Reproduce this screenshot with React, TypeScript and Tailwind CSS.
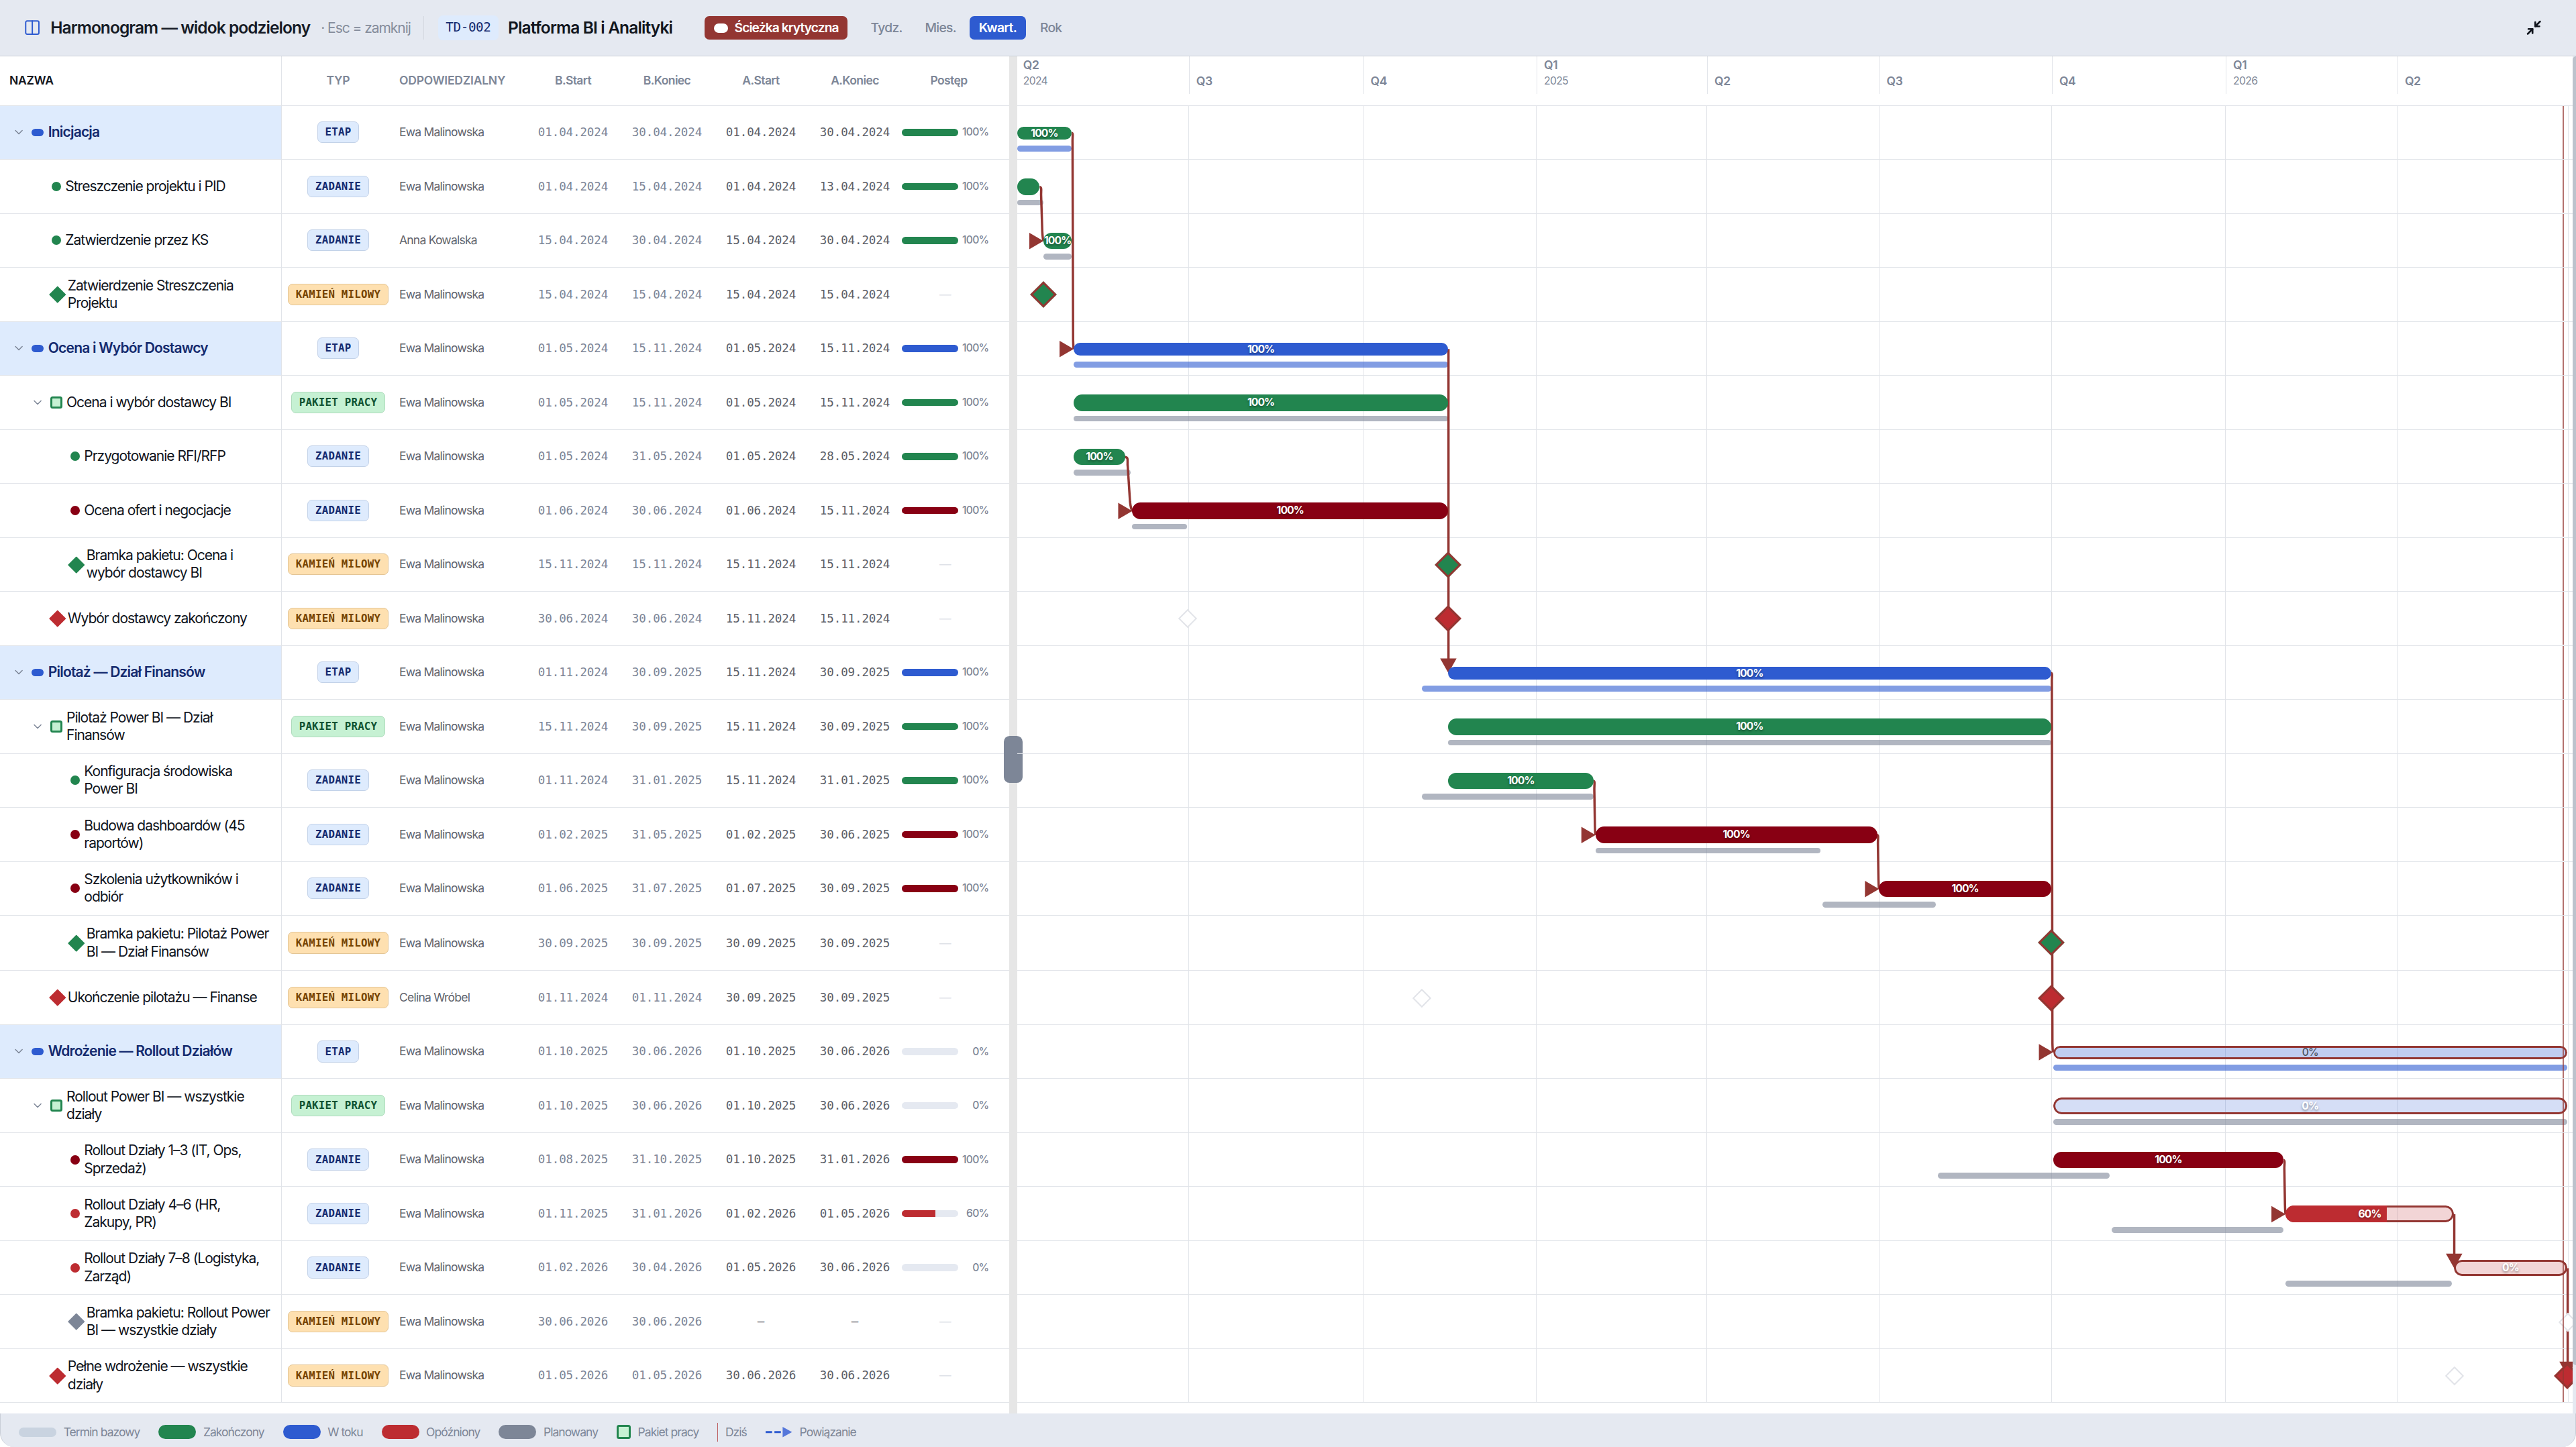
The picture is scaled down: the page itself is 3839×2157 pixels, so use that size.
import { ChevronDown, Columns2, Minimize2 } from 'lucide-react';

type Kind = 'stage' | 'package' | 'task' | 'milestone';
type Tone = 'green' | 'blue' | 'dark' | 'red' | 'gray';

interface Item {
  kind: Kind;
  level: 0 | 1 | 2;
  name: string;
  tone: Tone;
  owner?: string;
  dates: [string, string, string, string];
  progress?: number;
  barTone?: Tone;
  critical?: boolean;
  hideLabel?: boolean;
  tall?: boolean;
}

const ITEMS: Item[] = [
  { kind: 'stage', level: 0, name: 'Inicjacja', tone: 'green', dates: ['01.04.2024', '30.04.2024', '01.04.2024', '30.04.2024'], progress: 100 },
  { kind: 'task', level: 1, name: 'Streszczenie projektu i PID', tone: 'green', dates: ['01.04.2024', '15.04.2024', '01.04.2024', '13.04.2024'], progress: 100, hideLabel: true },
  { kind: 'task', level: 1, name: 'Zatwierdzenie przez KS', tone: 'green', owner: 'Anna Kowalska', dates: ['15.04.2024', '30.04.2024', '15.04.2024', '30.04.2024'], progress: 100 },
  { kind: 'milestone', level: 1, name: 'Zatwierdzenie Streszczenia\nProjektu', tone: 'green', dates: ['15.04.2024', '15.04.2024', '15.04.2024', '15.04.2024'] },
  { kind: 'stage', level: 0, name: 'Ocena i Wybór Dostawcy', tone: 'blue', dates: ['01.05.2024', '15.11.2024', '01.05.2024', '15.11.2024'], progress: 100 },
  { kind: 'package', level: 1, name: 'Ocena i wybór dostawcy BI', tone: 'green', dates: ['01.05.2024', '15.11.2024', '01.05.2024', '15.11.2024'], progress: 100 },
  { kind: 'task', level: 2, name: 'Przygotowanie RFI/RFP', tone: 'green', dates: ['01.05.2024', '31.05.2024', '01.05.2024', '28.05.2024'], progress: 100 },
  { kind: 'task', level: 2, name: 'Ocena ofert i negocjacje', tone: 'dark', dates: ['01.06.2024', '30.06.2024', '01.06.2024', '15.11.2024'], progress: 100 },
  { kind: 'milestone', level: 2, name: 'Bramka pakietu: Ocena i\nwybór dostawcy BI', tone: 'green', dates: ['15.11.2024', '15.11.2024', '15.11.2024', '15.11.2024'] },
  { kind: 'milestone', level: 1, name: 'Wybór dostawcy zakończony', tone: 'red', dates: ['30.06.2024', '30.06.2024', '15.11.2024', '15.11.2024'] },
  { kind: 'stage', level: 0, name: 'Pilotaż — Dział Finansów', tone: 'blue', dates: ['01.11.2024', '30.09.2025', '15.11.2024', '30.09.2025'], progress: 100 },
  { kind: 'package', level: 1, name: 'Pilotaż Power BI — Dział\nFinansów', tone: 'green', dates: ['15.11.2024', '30.09.2025', '15.11.2024', '30.09.2025'], progress: 100 },
  { kind: 'task', level: 2, name: 'Konfiguracja środowiska\nPower BI', tone: 'green', dates: ['01.11.2024', '31.01.2025', '15.11.2024', '31.01.2025'], progress: 100 },
  { kind: 'task', level: 2, name: 'Budowa dashboardów (45\nraportów)', tone: 'dark', dates: ['01.02.2025', '31.05.2025', '01.02.2025', '30.06.2025'], progress: 100 },
  { kind: 'task', level: 2, name: 'Szkolenia użytkowników i\nodbiór', tone: 'dark', dates: ['01.06.2025', '31.07.2025', '01.07.2025', '30.09.2025'], progress: 100 },
  { kind: 'milestone', level: 2, name: 'Bramka pakietu: Pilotaż Power\nBI — Dział Finansów', tone: 'green', dates: ['30.09.2025', '30.09.2025', '30.09.2025', '30.09.2025'], tall: true },
  { kind: 'milestone', level: 1, name: 'Ukończenie pilotażu — Finanse', tone: 'red', owner: 'Celina Wróbel', dates: ['01.11.2024', '01.11.2024', '30.09.2025', '30.09.2025'] },
  { kind: 'stage', level: 0, name: 'Wdrożenie — Rollout Działów', tone: 'blue', dates: ['01.10.2025', '30.06.2026', '01.10.2025', '30.06.2026'], progress: 0, critical: true },
  { kind: 'package', level: 1, name: 'Rollout Power BI — wszystkie\ndziały', tone: 'green', barTone: 'blue', dates: ['01.10.2025', '30.06.2026', '01.10.2025', '30.06.2026'], progress: 0, critical: true },
  { kind: 'task', level: 2, name: 'Rollout Działy 1–3 (IT, Ops,\nSprzedaż)', tone: 'dark', dates: ['01.08.2025', '31.10.2025', '01.10.2025', '31.01.2026'], progress: 100 },
  { kind: 'task', level: 2, name: 'Rollout Działy 4–6 (HR,\nZakupy, PR)', tone: 'red', dates: ['01.11.2025', '31.01.2026', '01.02.2026', '01.05.2026'], progress: 60, critical: true },
  { kind: 'task', level: 2, name: 'Rollout Działy 7–8 (Logistyka,\nZarząd)', tone: 'red', dates: ['01.02.2026', '30.04.2026', '01.05.2026', '30.06.2026'], progress: 0, critical: true },
  { kind: 'milestone', level: 2, name: 'Bramka pakietu: Rollout Power\nBI — wszystkie działy', tone: 'gray', dates: ['30.06.2026', '30.06.2026', '—', '—'] },
  { kind: 'milestone', level: 1, name: 'Pełne wdrożenie — wszystkie\ndziały', tone: 'red', dates: ['01.05.2026', '01.05.2026', '30.06.2026', '30.06.2026'] },
];

const BG: Record<Tone, string> = {
  green: 'bg-[#22854f]',
  blue: 'bg-[#2e5bd0]',
  dark: 'bg-[#880013]',
  red: 'bg-[#bd2c31]',
  gray: 'bg-[#7d8697]',
};

const TINT: Record<Tone, string> = {
  green: 'bg-[#22854f]/20',
  blue: 'bg-[#2e5bd0]/20',
  dark: 'bg-[#880013]/20',
  red: 'bg-[#bd2c31]/20',
  gray: 'bg-[#7d8697]/20',
};

const BADGE: Record<Kind, [string, string]> = {
  stage: ['ETAP', 'bg-[#deebfd] border-[#c3d2e8] text-[#142a6e]'],
  task: ['ZADANIE', 'bg-[#deebfd] border-[#c3d2e8] text-[#142a6e]'],
  package: ['PAKIET PRACY', 'bg-[#c6f1d3] border-[#addabb] text-[#0f5230]'],
  milestone: ['KAMIEŃ MILOWY', 'bg-[#fee0b0] border-[#e3c596] text-[#754300]'],
};

const DAY_WIDTH = 1.61;
const ORIGIN = Date.UTC(2024, 3, 1);

function toX(date: string) {
  const [d, m, y] = date.split('.').map(Number);
  return ((Date.UTC(y, m - 1, d) - ORIGIN) / 86400000) * DAY_WIDTH - 0.25;
}

const rowHeight = (item: Item) => (item.tall ? 47 : 46);
const rowHeightClass = (item: Item) => (item.tall ? 'h-[47px]' : 'h-[46px]');
const rowCenter = (index: number) => ITEMS.slice(0, index).reduce((sum, i) => sum + rowHeight(i), 0) + 23;

const QUARTERS = [
  { x: 0, label: 'Q2', year: '2024' },
  { x: 145.8, label: 'Q3' },
  { x: 294.2, label: 'Q4' },
  { x: 441.9, label: 'Q1', year: '2025' },
  { x: 587.1, label: 'Q2' },
  { x: 733.6, label: 'Q3' },
  { x: 880.7, label: 'Q4' },
  { x: 1028.8, label: 'Q1', year: '2026' },
  { x: 1175, label: 'Q2' },
  { x: 1320.8, label: '' },
];

const LINKS: [number, number][] = [
  [0, 4],
  [1, 2],
  [6, 7],
  [4, 10],
  [12, 13],
  [13, 14],
  [10, 17],
  [19, 20],
  [20, 21],
  [21, 23],
];

function Marker({ item }: { item: Item }) {
  if (item.kind === 'stage') return <span className="h-1.5 w-2.5 shrink-0 rounded-full bg-[#2e5bd0]" />;
  if (item.kind === 'package')
    return <span className="size-2.5 shrink-0 rounded-[2px] border-[1.8px] border-[#22854f] bg-[#c6f1d3]" />;
  if (item.kind === 'task') return <span className={`size-2 shrink-0 rounded-full ${BG[item.tone]}`} />;
  return <span className={`size-2.5 shrink-0 rotate-45 rounded-[0.5px] ${BG[item.tone]}`} />;
}

const INDENT = ['pl-2', 'pl-6', 'pl-10'];

function NameCell({ item }: { item: Item }) {
  const foldable = item.kind === 'stage' || item.kind === 'package';
  return (
    <div
      className={`flex w-60 shrink-0 items-center border-r border-[#e1e4e9] ${INDENT[item.level]} ${
        item.kind === 'stage' ? 'bg-[#deebfd]' : ''
      }`}
    >
      {foldable ? (
        <span className="mr-[3px] flex w-4 shrink-0 justify-center">
          <ChevronDown className="size-[11.5px] text-[#7d8697]" strokeWidth={1.8} />
        </span>
      ) : (
        <span className="w-5 shrink-0" />
      )}
      <Marker item={item} />
      <span
        className={`whitespace-pre text-xs leading-[15px] ${
          item.kind === 'stage'
            ? 'ml-1 font-semibold tracking-[-0.038em] text-[#142a6e]'
            : 'ml-[3.6px] tracking-[-0.048em] text-[#11151d]'
        }`}
      >
        {item.name}
      </span>
    </div>
  );
}

function TableRow({ item }: { item: Item }) {
  const [label, tone] = BADGE[item.kind];
  return (
    <div className={`flex border-b border-[#e1e4e9] ${rowHeightClass(item)}`}>
      <NameCell item={item} />
      <div className="flex w-24 shrink-0 items-center justify-center">
        <span
          className={`flex h-[18.5px] items-center whitespace-pre rounded border px-1.5 font-['DejaVu_Sans_Mono',monospace] text-[9px] font-bold tracking-[0.015em] ${tone}`}
        >
          {label}
        </span>
      </div>
      <div className="flex w-28 shrink-0 items-center pl-1 text-[10px] tracking-[-0.044em] text-[#5f646d]">
        {item.owner ?? 'Ewa Malinowska'}
      </div>
      {item.dates.map((date, i) => (
        <div
          key={i}
          className={`flex w-20 shrink-0 items-center justify-center font-['DejaVu_Sans_Mono',monospace] text-[10px] tracking-[-0.006em] ${
            i < 2 ? 'text-[#7d8697]' : 'text-[#5c6068]'
          }`}
        >
          {date}
        </div>
      ))}
      <div className="flex grow items-center">
        {item.progress === undefined ? (
          <span className="w-[74px] text-center text-[10px] text-[#dfe2e8]">—</span>
        ) : (
          <>
            <span className="h-1.5 w-12 overflow-hidden rounded-full bg-[#e5e9f1]">
              <span className={`block h-full ${BG[item.tone]}`} style={{ width: `${item.progress}%` }} />
            </span>
            <span className="w-[26px] text-right text-[9px] font-medium tracking-[-0.048em] text-[#7d8697]">
              {item.progress}%
            </span>
          </>
        )}
      </div>
    </div>
  );
}

function Baseline({ item }: { item: Item }) {
  if (item.kind === 'milestone') return null;
  const x = toX(item.dates[0]);
  return (
    <div
      className={`absolute top-[34px] h-[5px] rounded-full opacity-60 ${item.kind === 'stage' ? 'bg-[#2e5bd0]' : 'bg-[#7d8697]'}`}
      style={{ left: x, width: toX(item.dates[1]) - x }}
    />
  );
}

function Bar({ item }: { item: Item }) {
  if (item.kind === 'milestone') {
    const planned = item.dates[2] === '—';
    const moved = item.dates[0] !== item.dates[2];
    return (
      <>
        {moved && (
          <div
            className="absolute top-[17.3px] -ml-[5.7px] size-[11.4px] rotate-45 border-[1.5px] border-[#e2e4e9] bg-white"
            style={{ left: toX(item.dates[0]) + 0.5 }}
          />
        )}
        {!planned && (
          <div
            className={`absolute top-[15px] -ml-2 size-4 rotate-45 border-2 border-[#933632] ${BG[item.tone]}`}
            style={{ left: toX(item.dates[2]) + 0.2 }}
          />
        )}
      </>
    );
  }
  const x = toX(item.dates[2]);
  const stage = item.kind === 'stage';
  const tone = item.barTone ?? item.tone;
  const progress = item.progress ?? 0;
  const label =
    stage && progress === 0
      ? 'font-medium text-[#4a5160]'
      : 'font-bold text-white [text-shadow:0_1px_2px_rgba(0,0,0,0.4)]';
  return (
    <div
      className={`absolute overflow-hidden rounded-full ${stage ? 'top-[18px] h-[11px]' : 'top-4 h-3.5'}`}
      style={{ left: x, width: toX(item.dates[3]) - x + (item.dates[3] === '28.05.2024' ? 0.4 : 0) }}
    >
      {item.critical && (
        <div
          className={`absolute inset-0 rounded-full border-2 border-[#933632] ${stage ? 'bg-[#2e5bd0]/30' : TINT[tone]}`}
        />
      )}
      <div className={`absolute inset-y-0 left-0 ${BG[tone]}`} style={{ width: `${progress}%` }} />
      {!item.hideLabel && (
        <div
          className={`absolute inset-x-0 inset-y-0 flex items-center justify-center text-[9px] leading-none tracking-[-0.06em] ${label}`}
        >
          {progress}%
        </div>
      )}
    </div>
  );
}

function Links() {
  return (
    <svg className="absolute left-0 top-0 h-[1105px] w-[1325px] overflow-visible" fill="none">
      {LINKS.map(([from, to]) => {
        const x1 = toX(ITEMS[from].dates[3]);
        const x2 = toX(ITEMS[to].dates[2]);
        const y1 = rowCenter(from);
        const y2 = rowCenter(to);
        const down = x1 === x2;
        const c = Math.max((x2 - x1) / 2, 0);
        return (
          <g key={`${from}-${to}`}>
            <path
              d={
                down
                  ? `M${x1 + 0.4} ${y1}V${y2 - 10}`
                  : `M${x1} ${y1}C${x1 + c + 0.6} ${y1} ${x1 + c * 0.6} ${y1 + 4} ${x1 + c * 0.8} ${y1 + 8}L${x2 - c * 0.6} ${y2 - 8}Q${x2 - c * 0.4} ${y2 - 2} ${x2} ${y2}`
              }
              stroke="#933632"
              strokeWidth={2}
            />
            <path
              d={down ? `M${x2 + 0.3} ${y2}l-7 -12.5h14z` : `M${x2} ${y2}l-12 -7v14z`}
              fill="#933632"
            />
          </g>
        );
      })}
    </svg>
  );
}

function Chart() {
  return (
    <div className="relative min-w-0 flex-1 overflow-hidden">
      <div className="relative h-[42px] border-b border-[#e1e4e9]">
        {QUARTERS.slice(0, 9).map((q) => (
          <div
            key={q.x}
            className={`absolute top-0 h-8 text-[10px] leading-[14px] text-[#7d8697] ${
              q.x > 0 ? 'ml-[0.6px] border-l border-[#e1e4e9] pl-[5.5px]' : 'pl-[5px]'
            } ${q.year ? 'pt-[0.5px]' : 'pt-[14px]'}`}
            style={{ left: q.x }}
          >
            <div className="font-semibold tracking-[-0.02em]">{q.label}</div>
            {q.year && <div className="text-[9px] tracking-[-0.044em]">{q.year}</div>}
          </div>
        ))}
      </div>
      <div className="relative">
        {QUARTERS.slice(1).map((q) => (
          <div key={q.x} className="absolute inset-y-0 border-l border-[#e1e4e9]" style={{ left: q.x }} />
        ))}
        {ITEMS.map((item) => (
          <div key={item.name} className={`relative border-b border-[#e1e4e9] ${rowHeightClass(item)}`}>
            <Baseline item={item} />
          </div>
        ))}
        <Links />
        <div className="absolute inset-0">
          {ITEMS.map((item) => (
            <div key={item.name} className={`relative ${rowHeightClass(item)}`}>
              <Bar item={item} />
              <div className="absolute bottom-[0.6px] left-[1316px] top-0 w-[1.2px] bg-[#933632]/70" />
            </div>
          ))}
        </div>
      </div>
    </div>
  );
}

function Header() {
  return (
    <header className="flex h-12 shrink-0 items-center border-b border-[#c9ced7] bg-[#e5e9f1] pl-5">
      <Columns2 className="size-[15px] shrink-0 text-[#2e5bd0]" strokeWidth={1.8} />
      <h1 className="ml-2 w-[230.3px] shrink-0 whitespace-nowrap text-sm font-semibold tracking-[-0.038em] text-[#161b26]">
        Harmonogram — widok podzielony
      </h1>
      <span className="w-[87.2px] shrink-0 whitespace-nowrap text-xs tracking-[-0.05em] text-[#858d9c]">· Esc = zamknij</span>
      <span className="h-5 border-l border-[#d3d8e0]" />
      <span className="ml-3 flex h-[21px] w-[51.5px] shrink-0 items-center justify-center rounded bg-[#deebfd] font-['DejaVu_Sans_Mono',monospace] text-[11px] tracking-[-0.02em] text-[#142a6e]">
        TD-002
      </span>
      <h2 className="ml-2 w-[167.4px] shrink-0 whitespace-nowrap text-sm font-semibold tracking-[-0.035em] text-[#11151d]">
        Platforma BI i Analityki
      </h2>
      <button className="flex h-[20.5px] w-[122px] shrink-0 items-center rounded bg-[#933632] pl-2 text-[11px] font-semibold tracking-[-0.048em] text-white">
        <span className="mr-[5.5px] h-2 w-3 rounded-full bg-white" />
        Ścieżka krytyczna
      </button>
      <div className="ml-3 flex gap-1 text-[11px] font-medium tracking-[-0.035em] text-[#7d8697]">
        <button className="h-[20.5px] w-[42px] text-center">Tydz.</button>
        <button className="h-[20.5px] w-[42px] text-center">Mies.</button>
        <button className="h-[20.5px] w-[47.5px] rounded bg-[#2e5bd0] text-center font-semibold text-white">Kwart.</button>
        <button className="h-[20.5px] w-[35px] text-center">Rok</button>
      </div>
      <Minimize2 className="ml-auto mr-[29px] size-3.5 text-[#11151d]" strokeWidth={2.6} />
    </header>
  );
}

function Table() {
  return (
    <div className="w-[859.4px] shrink-0 overflow-hidden">
      <div className="flex h-[42px] items-stretch border-b border-[#e1e4e9] text-[10px] font-semibold text-[#7d8697]">
        <div className="flex w-60 shrink-0 items-center border-r border-[#e1e4e9] pl-2 tracking-[-0.012em] text-[#11151d]">
          NAZWA
        </div>
        <div className="flex w-24 shrink-0 items-center justify-center tracking-[-0.012em]">TYP</div>
        <div className="flex w-28 shrink-0 items-center pl-1 tracking-[-0.012em]">ODPOWIEDZIALNY</div>
        {['B.Start', 'B.Koniec', 'A.Start', 'A.Koniec', 'Postęp'].map((label) => (
          <div key={label} className="flex w-20 shrink-0 items-center justify-center tracking-[-0.034em]">
            {label}
          </div>
        ))}
      </div>
      {ITEMS.map((item) => (
        <TableRow key={item.name} item={item} />
      ))}
    </div>
  );
}

const STATUSES: [string, string][] = [
  ['Zakończony', 'bg-[#22854f]'],
  ['W toku', 'bg-[#2e5bd0]'],
  ['Opóźniony', 'bg-[#bd2c31]'],
  ['Planowany', 'bg-[#7d8697]'],
];

function Legend() {
  return (
    <footer className="h-[28.6px] shrink-0 overflow-hidden bg-white">
      <div className="flex h-full items-start gap-4 rounded-b-xl border-x border-[#c9ced7] bg-[#e5e9f1] pl-[15.5px] pt-[9px] text-[10px] leading-[14px] tracking-[-0.055em] text-[#7d8697]">
        <div className="flex items-center gap-1.5">
          <span className="h-2 w-8 rounded-full bg-[#c9d3e0]" />
          Termin bazowy
        </div>
        {STATUSES.map(([label, tone]) => (
          <div key={label} className="flex items-center gap-1.5">
            <span className={`h-3 w-8 rounded-full ${tone}`} />
            {label}
          </div>
        ))}
        <div className="flex items-center gap-1.5">
          <span className="size-3 rounded-[2px] border-2 border-[#22854f] bg-[#c6f1d3]" />
          Pakiet pracy
        </div>
        <div className="flex items-center gap-1.5">
          <span className="-my-px h-4 border-l border-[#bd5f62]" />
          Dziś
        </div>
        <div className="flex items-center gap-1.5">
          <svg className="h-2.5 w-[23px] overflow-visible" viewBox="0 0 23 10">
            <path d="M0 5h14" stroke="#2e5bd0" strokeWidth="1.8" strokeDasharray="5.5 2" />
            <path d="M14.5 0.6l8 4.4l-8 4.4z" fill="#5577da" />
          </svg>
          Powiązanie
        </div>
      </div>
    </footer>
  );
}

export default function App() {
  return (
    <div className="flex h-[1232.58px] w-[2193.72px] flex-col overflow-hidden bg-white font-['Inter',sans-serif] [zoom:1.75]">
      <Header />
      <main className="flex min-h-0 flex-1">
        <Table />
        <div className="relative w-[6.9px] shrink-0 bg-[#e6e6e6]">
          <div className="absolute -left-[4.5px] top-[579px] h-10 w-4 rounded-[5px] bg-[#7d8697]" />
        </div>
        <Chart />
        <div className="w-[2.9px] shrink-0 bg-[#e5e9f1]">
          <div className="h-[1115px] rounded-l-full bg-[#bcc2cc]" />
        </div>
      </main>
      <Legend />
    </div>
  );
}
